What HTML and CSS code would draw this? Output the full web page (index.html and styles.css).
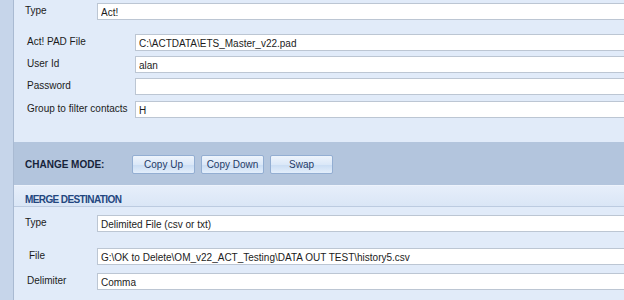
FILE: index.html
```html
<!DOCTYPE html>
<html lang="en">
<head>
  <meta charset="UTF-8">
  <title>Merge Settings</title>
  <link rel="stylesheet" href="styles.css">
</head>
<body>
  <div class="frame">
    <div class="side"></div>
    <main class="main">

      <section class="source">
        <div class="row row-type">
          <label class="lbl">Type</label>
          <input class="field wide" value="Act!">
        </div>
        <div class="group">
          <div class="row">
            <label class="lbl">Act! PAD File</label>
            <input class="field" value="C:\ACTDATA\ETS_Master_v22.pad">
          </div>
          <div class="row">
            <label class="lbl">User Id</label>
            <input class="field" value="alan">
          </div>
          <div class="row">
            <label class="lbl">Password</label>
            <input class="field" value="">
          </div>
          <div class="row">
            <label class="lbl">Group to filter contacts</label>
            <input class="field" value="H">
          </div>
        </div>
      </section>

      <section class="mode">
        <span class="mode-title">CHANGE MODE:</span>
        <button class="btn">Copy Up</button>
        <button class="btn">Copy Down</button>
        <button class="btn">Swap</button>
      </section>

      <div class="dest-head">MERGE DESTINATION</div>

      <section class="dest">
        <div class="row">
          <label class="lbl">Type</label>
          <input class="field wide" value="Delimited File (csv or txt)">
        </div>
        <div class="row row-file">
          <label class="lbl indent">File</label>
          <input class="field wide" value="G:\OK to Delete\OM_v22_ACT_Testing\DATA OUT TEST\history5.csv">
        </div>
        <div class="row row-delim">
          <label class="lbl indent-s">Delimiter</label>
          <input class="field wide" value="Comma">
        </div>
      </section>

    </main>
  </div>
</body>
</html>
```

FILE: styles.css
```css
body {
  margin: 0;
  overflow: hidden;
  font-family: "Liberation Sans", Arial, sans-serif;
  font-size: 10px;
  color: #1b1b1b;
  background: #e1ebf9;
}
.frame {
  display: flex;
  height: 300px;
}
.side {
  width: 13px;
  flex: none;
  background: #c6d5ea;
  border-right: 1px solid #a9bad2;
}
.main {
  width: 720px;
  flex: none;
  background: #e1ebf9;
}
.row {
  display: flex;
  align-items: center;
  height: 17px;
}
.lbl {
  width: 72px;
  flex: none;
  padding-left: 11px;
  white-space: nowrap;
  margin-top: -2px;
}
.field {
  flex: 1;
  height: 17px;
  box-sizing: border-box;
  border: 1px solid #bcc6d3;
  border-right: none;
  background: #fff;
  font-family: inherit;
  font-size: 10px;
  line-height: 13px;
  color: #1b1b1b;
  padding: 1px 3px 0;
  margin: 0;
  outline: none;
}

/* source block */
.source {
  padding-top: 3px;
  height: 142px;
  box-sizing: border-box;
}
.group {
  margin-top: 14px;
  display: flex;
  flex-direction: column;
  gap: 5px;
}
.group .lbl {
  width: 108px;
  padding-left: 13px;
}
.group .row:last-child {
  margin-top: 1px;
}

/* change mode band */
.mode {
  height: 43px;
  background: #b3c5dd;
  display: flex;
  align-items: center;
  padding-left: 11px;
  gap: 6px;
}
.mode-title {
  font-weight: bold;
  font-size: 10px;
  color: #17233a;
  width: 101px;
  margin-top: 1px;
}
.btn {
  width: 63px;
  height: 19px;
  margin-top: 2px;
  border: 1px solid #93aed2;
  border-radius: 2px;
  background: linear-gradient(#eef4fc, #dbe8f8 50%, #c9dcf3 51%, #e3eefb);
  font-family: inherit;
  font-size: 10px;
  color: #1f3a66;
  padding: 0;
}

/* destination */
.dest-head {
  height: 12px;
  padding: 8px 0 0 11px;
  line-height: 12px;
  background: linear-gradient(#e6eefa, #dae6f6);
  border-top: 1px solid #edf3fc;
  border-bottom: 1px solid #bccbe0;
  font-weight: bold;
  font-size: 10px;
  letter-spacing: -0.6px;
  color: #23467f;
}
.dest {
  padding-top: 8px;
}
.row-file {
  margin-top: 16px;
}
.row-delim {
  margin-top: 8px;
}
.indent {
  padding-left: 15px;
  width: 68px;
}
.indent-s {
  padding-left: 13px;
  width: 70px;
}
```
